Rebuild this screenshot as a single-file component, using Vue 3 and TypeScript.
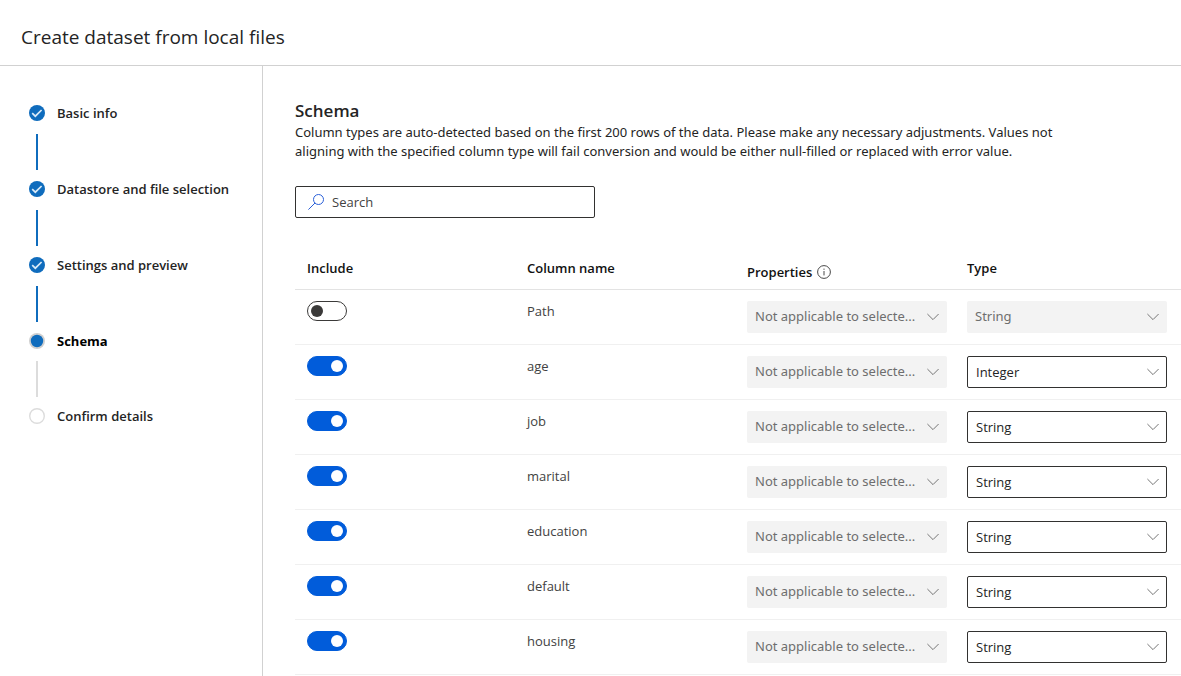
<script setup lang="ts">
import { ref } from 'vue'

type StepState = 'done' | 'current' | 'pending'

interface Step {
  label: string
  state: StepState
}

interface Column {
  name: string
  include: boolean
  type: string
}

const steps: Step[] = [
  { label: 'Basic info', state: 'done' },
  { label: 'Datastore and file selection', state: 'done' },
  { label: 'Settings and preview', state: 'done' },
  { label: 'Schema', state: 'current' },
  { label: 'Confirm details', state: 'pending' },
]

const types = ['String', 'Integer']
const search = ref('')

const columns = ref<Column[]>([
  { name: 'Path', include: false, type: 'String' },
  { name: 'age', include: true, type: 'Integer' },
  { name: 'job', include: true, type: 'String' },
  { name: 'marital', include: true, type: 'String' },
  { name: 'education', include: true, type: 'String' },
  { name: 'default', include: true, type: 'String' },
  { name: 'housing', include: true, type: 'String' },
])
</script>

<template>
  <div class="page">
    <header class="header">
      <h1 class="title">Create dataset from local files</h1>
    </header>
    <div class="body">
      <nav class="sidebar" aria-label="Steps">
        <ol class="steps">
          <li v-for="step in steps" :key="step.label" class="step" :class="step.state">
            <span class="step-row">
              <svg class="step-icon" viewBox="0 0 16 16" aria-hidden="true">
                <template v-if="step.state === 'done'">
                  <circle cx="8" cy="8" r="8" fill="#0f6cbd" />
                  <path d="M3.2 8.2 6.3 11.2 12.6 5" fill="none" stroke="#d9eaf8" stroke-width="1.7" />
                </template>
                <template v-else-if="step.state === 'current'">
                  <circle cx="8" cy="8" r="8" fill="#cfcfcf" />
                  <circle cx="8" cy="8" r="6.2" fill="#0f6cbd" />
                </template>
                <circle v-else cx="8" cy="8" r="7.3" fill="#fff" stroke="#dcdcdc" stroke-width="1.4" />
              </svg>
              <span class="step-label">{{ step.label }}</span>
            </span>
            <span class="connector"></span>
          </li>
        </ol>
      </nav>
      <main class="content">
        <h2 class="heading">Schema</h2>
        <p class="description">
          Column types are auto-detected based on the first 200 rows of the data. Please make any necessary adjustments.
          Values not aligning with the specified column type will fail conversion and would be either null-filled or
          replaced with error value.
        </p>
        <label class="search">
          <svg class="search-icon" viewBox="0 0 16 16" aria-hidden="true">
            <circle cx="10.5" cy="5.5" r="5" />
            <path d="M7 9 .4 15.6" />
          </svg>
          <input v-model="search" class="search-input" type="text" placeholder="Search" aria-label="Search" />
        </label>
        <table class="table">
          <thead>
            <tr>
              <th scope="col">Include</th>
              <th scope="col">Column name</th>
              <th scope="col" class="properties">
                <span class="properties-label">
                  Properties
                  <svg class="info-icon" viewBox="0 0 14 14" aria-hidden="true">
                    <circle cx="7" cy="7" r="6.4" />
                    <path d="M7 6v4.4M7 3.6v1.2" />
                  </svg>
                </span>
              </th>
              <th scope="col" class="last">Type</th>
            </tr>
          </thead>
          <tbody>
            <tr v-for="column in columns" :key="column.name">
              <td>
                <input
                  v-model="column.include"
                  class="toggle"
                  type="checkbox"
                  role="switch"
                  :aria-label="`Include ${column.name}`"
                />
              </td>
              <td>{{ column.name }}</td>
              <td>
                <span class="dropdown">
                  <select class="select" disabled :aria-label="`Properties of ${column.name}`">
                    <option>Not applicable to selecte...</option>
                  </select>
                  <svg class="chevron" viewBox="0 0 12 8" aria-hidden="true"><path d="M.4 1 6 6.6 11.6 1" /></svg>
                </span>
              </td>
              <td>
                <span class="dropdown">
                  <select
                    v-model="column.type"
                    class="select"
                    :disabled="!column.include"
                    :aria-label="`Type of ${column.name}`"
                  >
                    <option v-for="type in types" :key="type" :value="type">{{ type }}</option>
                  </select>
                  <svg class="chevron" viewBox="0 0 12 8" aria-hidden="true"><path d="M.4 1 6 6.6 11.6 1" /></svg>
                </span>
              </td>
            </tr>
          </tbody>
        </table>
      </main>
    </div>
  </div>
</template>

<style>
body {
  margin: 0;
  background: #fff;
}
</style>

<style scoped>
.page {
  box-sizing: border-box;
  display: flex;
  flex-direction: column;
  min-height: 100vh;
  font-family: 'Segoe UI', 'Open Sans', 'Noto Sans', sans-serif;
  font-size: 13px;
  line-height: 20px;
  color: #242424;
}

.header {
  padding: 23px 21px 14px;
  border-bottom: 1px solid #d1d1d1;
}

.title {
  margin: 0;
  font-size: 19px;
  font-weight: 400;
  line-height: 28px;
}

.body {
  display: flex;
  flex: 1;
}

.sidebar {
  box-sizing: border-box;
  flex: 0 0 263px;
  padding: 37px 16px 0 29px;
  border-right: 1px solid #d1d1d1;
}

.steps {
  margin: 0;
  padding: 0;
  list-style: none;
}

.step-row {
  display: flex;
  align-items: center;
  gap: 12px;
}

.step-icon {
  width: 16px;
  height: 16px;
}

.step-label {
  font-weight: 600;
}

.current .step-label {
  font-weight: 700;
  color: #000;
}

.connector {
  display: block;
  width: 2px;
  height: 36px;
  margin: 11px 0 9px 7px;
  background: #0f6cbd;
}

.current .connector {
  margin-top: 10px;
  background: #dcdcdc;
}

.pending .connector {
  display: none;
}

.content {
  flex: 1;
  min-width: 0;
  padding: 33px 0 0 32px;
}

.heading {
  margin: 0;
  font-size: 17px;
  font-weight: 600;
  line-height: 24px;
}

.description {
  max-width: 790px;
  margin: 0 0 25px;
  font-family: 'Segoe UI', 'Noto Sans', sans-serif;
  line-height: 19px;
}

.search {
  box-sizing: border-box;
  display: flex;
  align-items: center;
  gap: 8px;
  width: 300px;
  height: 32px;
  padding: 0 12px;
  border: 1px solid #323130;
  border-radius: 2px;
}

.search-icon {
  width: 16px;
  height: 16px;
  fill: none;
  stroke: #2a5fd8;
}

.search-input {
  flex: 1;
  min-width: 0;
  padding: 0;
  border: 0;
  outline: 0;
  background: none;
  font: inherit;
  color: inherit;
}

.search-input::placeholder {
  color: #424242;
  opacity: 1;
}

.table {
  width: 100%;
  margin-top: 28px;
  border-collapse: separate;
  border-spacing: 0;
  table-layout: fixed;
}

th {
  width: 220px;
  box-sizing: border-box;
  padding: 12px 0 11px 12px;
  border-bottom: 1px solid #e3e3e3;
  font-weight: 600;
  color: #111;
  text-align: left;
  vertical-align: top;
}

.properties {
  padding: 16px 0 7px 12px;
}

.last {
  width: auto;
}

.properties-label {
  display: flex;
  align-items: center;
  gap: 5px;
}

.info-icon {
  width: 14px;
  height: 14px;
  fill: none;
  stroke: #333;
  stroke-width: 0.9;
}

td {
  height: 32px;
  padding: 11px 0 11px 12px;
  border-bottom: 1px solid #f0f0f0;
  color: #424242;
  vertical-align: top;
}

.toggle {
  box-sizing: border-box;
  display: flex;
  align-items: center;
  width: 40px;
  height: 20px;
  margin: 0;
  padding: 0 3px;
  border: 1px solid #3b3a39;
  border-radius: 10px;
  background: #fff;
  appearance: none;
}

.toggle::before {
  width: 12px;
  height: 12px;
  border-radius: 50%;
  background: #3b3a39;
  content: '';
}

.toggle:checked {
  justify-content: flex-end;
  border-color: #015cda;
  background: #015cda;
}

.toggle:checked::before {
  background: #fff;
}

.dropdown {
  display: grid;
  width: 200px;
  align-items: center;
}

.select {
  grid-area: 1 / 1;
  box-sizing: border-box;
  width: 100%;
  height: 32px;
  padding: 0 28px 0 8px;
  border: 1px solid #323130;
  border-radius: 2px;
  background: #fff;
  font: inherit;
  color: #242424;
  appearance: none;
}

.select:disabled {
  padding-bottom: 2px;
  border: 0;
  background: #f3f3f3;
  font-family: 'Segoe UI', 'Noto Sans', sans-serif;
  color: #6e6e6e;
  opacity: 1;
}

.chevron {
  grid-area: 1 / 1;
  justify-self: end;
  width: 12px;
  height: 8px;
  margin-right: 8px;
  fill: none;
  stroke: #767676;
  pointer-events: none;
}
</style>
